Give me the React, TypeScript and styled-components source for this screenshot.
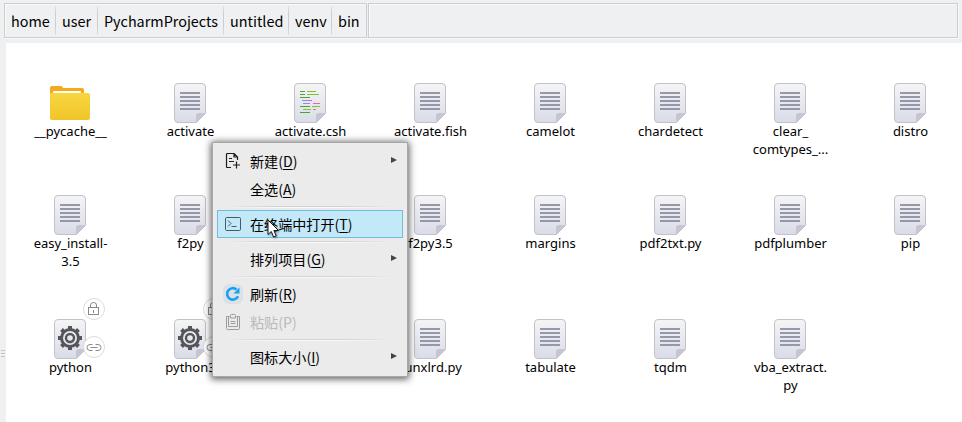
import React from 'react'
import styled, { createGlobalStyle } from 'styled-components'

type Kind = 'folder' | 'text' | 'code' | 'exec'

interface Entry {
    lines: string[]
    kind: Kind
    linked?: boolean
    column?: number
}

const crumbs = [
    { name: "home", width: 51 },
    { name: "user", width: 42 },
    { name: "PycharmProjects", width: 126 },
    { name: "untitled", width: 65 },
    { name: "venv", width: 43 },
    { name: "bin", width: 34 },
]

const entries: Entry[] = [
    { lines: ["__pycache__"], kind: 'folder' },
    { lines: ["activate"], kind: 'text' },
    { lines: ["activate.csh"], kind: 'code' },
    { lines: ["activate.fish"], kind: 'text' },
    { lines: ["camelot"], kind: 'text' },
    { lines: ["chardetect"], kind: 'text' },
    { lines: ["clear_", "comtypes_..."], kind: 'text' },
    { lines: ["distro"], kind: 'text' },
    { lines: ["easy_install-", "3.5"], kind: 'text' },
    { lines: ["f2py"], kind: 'text' },
    { lines: ["f2py3.5"], kind: 'text', column: 4 },
    { lines: ["margins"], kind: 'text' },
    { lines: ["pdf2txt.py"], kind: 'text' },
    { lines: ["pdfplumber"], kind: 'text' },
    { lines: ["pip"], kind: 'text' },
    { lines: ["python"], kind: 'exec', linked: true },
    { lines: ["python3"], kind: 'exec', linked: true },
    { lines: ["runxlrd.py"], kind: 'text', column: 4 },
    { lines: ["tabulate"], kind: 'text' },
    { lines: ["tqdm"], kind: 'text' },
    { lines: ["vba_extract.", "py"], kind: 'text' },
]

const codeLines: [number, number, number, string][] = [
    [6, 8.5, 5, '#4aa52c'], [13, 8.5, 9, '#7dc52e'],
    [6, 11.5, 5, '#4aa52c'], [13, 11.5, 12, '#7dc52e'],
    [6, 14.5, 10, '#4aa52c'],
    [8, 17.5, 10, '#9a83ee'],
    [9, 20.5, 7, '#9a83ee'], [19, 20.5, 7, '#ea6c8c'],
    [6, 23.5, 10, '#4aa52c'], [18, 23.5, 8, '#7dc52e'],
    [9, 26.5, 8, '#7dc52e'], [19, 26.5, 3, '#ea6c8c'],
    [6, 29.5, 10, '#4aa52c'],
]

const FolderIcon = () => (
    <svg width="40" height="40" viewBox="0 0 40 40">
        <path d="M0 5q0-2 2-2h9q1 0 1.500 1l.5 1H32q2 0 2 2v5H0z" fill="#f6a91b" />
        <rect x="3" y="8" width="28" height="4" rx="1" fill="#fff" />
        <path d="M0 10h38q2 0 2 2v23q0 2-2 2H2q-2 0-2-2z" fill="url(#folder)" />
        <defs>
            <linearGradient id="folder" x1="0" y1="0" x2="0" y2="1">
                <stop offset="0" stopColor="#f8d640" />
                <stop offset="1" stopColor="#f0c52a" />
            </linearGradient>
        </defs>
    </svg>
)

const SheetIcon = ({ kind }: { kind: Kind }) => (
    <svg width="32" height="40" viewBox="0 0 32 40">
        <defs>
            <linearGradient id="sheet" x1="0" y1="0" x2="0" y2="1">
                <stop offset="0" stopColor="#f5f5f6" />
                <stop offset="1" stopColor="#d9dbe8" />
            </linearGradient>
        </defs>
        <path d="M4 .5h24q3.500 0 3.500 3.500v26.500l-9 9H4q-3.500 0-3.500-3.500V4Q.5.5 4 .5z" fill="url(#sheet)" stroke="#c2c3ca" />
        <path d="M22 39.500V33q0-3 3-3h6.500z" fill="#c5c6d2" />
        {kind === 'text' && [9, 13, 17, 21, 25].map((y) => (
            <rect key={y} x="6" y={y} width="20" height="2" fill="#9498a9" />
        ))}
        {kind === 'code' && codeLines.map(([x, y, w, color], i) => (
            <rect key={i} x={x} y={y - .5} width={w} height="1" fill={color} />
        ))}
        {kind === 'exec' && (
            <g transform="translate(16 19)" fill="none" stroke="#55565a">
                <circle r="8.500" strokeWidth="3" />
                <circle r="4" strokeWidth="2.400" />
                {[0, 45, 90, 135, 180, 225, 270, 315].map((a) => (
                    <path key={a} d="M0-9v-3" strokeWidth="4" transform={`rotate(${a})`} />
                ))}
            </g>
        )}
    </svg>
)

const LockIcon = () => (
    <svg width="20" height="20" viewBox="0 0 20 20" fill="none" stroke="#8b8b8b">
        <rect x="4.500" y="8.500" width="10" height="7" />
        <path d="M6.500 8.500V6q0-2.500 3-2.500t3 2.500v2.500M9.500 11v3" />
    </svg>
)

const LinkIcon = () => (
    <svg width="20" height="20" viewBox="0 0 20 20" fill="none" stroke="#8b8b8b">
        <path d="M8.500 13.500H6a3 3 0 0 1 0-6h2.500M11.500 7.500H14a3 3 0 0 1 0 6h-2.500M6.500 10.500h7" />
    </svg>
)

const NewIcon = () => (
    <svg width="16" height="16" viewBox="0 0 16 16" fill="none" stroke="#1d1d1d" strokeWidth="1.200">
        <path d="M6 14.500H2.500q-1 0-1-1V1.500q0-1 1-1h6.500l3.500 3.500V7M9 .5V4h3.500M4 5.500h3M4 8.500h5M11.500 8.500v7M8 12h7" />
    </svg>
)

const TerminalIcon = () => (
    <svg width="16" height="16" viewBox="0 0 16 16" fill="none" stroke="#4a5a62">
        <rect x=".5" y="1.500" width="15" height="13" rx="1.200" />
        <path d="M3 4.500l3 3-3 3M6.500 10.500h5" />
    </svg>
)

const RefreshIcon = () => (
    <svg width="20" height="20" viewBox="0 0 20 20">
        <rect width="20" height="20" rx="6" fill="#dce1e6" />
        <path d="M15 12.200A5.700 5.700 0 1 1 13.600 5.600" fill="none" stroke="#16a2f2" strokeWidth="2.600" />
        <path d="M16.500 3.500v6h-6z" fill="#16a2f2" />
    </svg>
)

const PasteIcon = () => (
    <svg width="16" height="16" viewBox="0 0 16 16" fill="none" stroke="#9c9c9c">
        <path d="M4.500 2.500h-3v12q0 1 1 1h11q1 0 1-1v-12h-3M3.500 2.500v10h9v-10" />
        <path d="M5.500 4V1.500q0-1 1-1h3q1 0 1 1V4zM5.500 7.500h5M5.500 9.500h5" />
    </svg>
)

interface ItemProps {
    label: string
    hotkey: string
    icon?: React.ReactNode
    more?: boolean
    active?: boolean
    disabled?: boolean
}

const Item = ({ label, hotkey, icon, more, active, disabled }: ItemProps) => (
    <MenuItem $active={active} $disabled={disabled}>
        <IconSlot>{icon}</IconSlot>
        <ItemText>{label}({disabled ? hotkey : <u>{hotkey}</u>})</ItemText>
        {more && <Arrow />}
    </MenuItem>
)

const App = () => {
  return (
    <Window>
        <GlobalStyle />
        <Toolbar>
            <Path>
                {crumbs.map((el) => (
                    <Crumb key={el.name} $width={el.width}>{el.name}</Crumb>
                ))}
            </Path>
            <PathRest />
        </Toolbar>
        <Body>
            <Splitter><Grip /><Grip /><Grip /></Splitter>
            <Files>
                {entries.map((el, i) => (
                    <File key={i} $column={el.column}>
                        <Thumb>
                            {el.kind === 'folder' ? <FolderIcon /> : <SheetIcon kind={el.kind} />}
                            {el.linked && <Badge $top={-21}><LockIcon /></Badge>}
                            {el.linked && <Badge $top={17}><LinkIcon /></Badge>}
                        </Thumb>
                        <Label>
                            {el.lines.map((line) => <Name key={line}>{line}</Name>)}
                        </Label>
                    </File>
                ))}
            </Files>
        </Body>
        <Menu>
            <Item label="新建" hotkey="D" icon={<NewIcon />} more />
            <Item label="全选" hotkey="A" />
            <Divider />
            <Item label="在终端中打开" hotkey="T" icon={<TerminalIcon />} active />
            <Divider />
            <Item label="排列项目" hotkey="G" more />
            <Divider />
            <Item label="刷新" hotkey="R" icon={<RefreshIcon />} />
            <Item label="粘贴" hotkey="P" icon={<PasteIcon />} disabled />
            <Divider />
            <Item label="图标大小" hotkey="I" more />
        </Menu>
        <Cursor width="13" height="20" viewBox="0 0 13 20">
            <path d="M1 1v14.500l3.300-3 2.300 5.500 2.600-1.100-2.300-5.400h4.600z" fill="#fff" stroke="#111" />
        </Cursor>
    </Window>
  )
}

export default App;

const GlobalStyle = createGlobalStyle`
* {
box-sizing: border-box;
}
body {
margin: 0;
overflow: hidden;
}
svg {
display: block;
flex: none;
}
`
const Window = styled.div`
position: relative;
width: 962px;
height: 422px;
display: flex;
flex-direction: column;
background-color: #eff0f2;
color: #000;
font-family: "Noto Sans", "Noto Sans CJK SC", sans-serif;
overflow: hidden;
`
const Toolbar = styled.header`
height: 43px;
padding: 3px 3px 5px 4px;
display: flex;
gap: 1px;
`
const Path = styled.nav`
display: flex;
border: 1px solid #cccdd0;
box-shadow: inset 1px 1px 0 #fafafb, 0 1px 0 #fafafb;
`
const Crumb = styled.span<{ $width: number }>`
width: ${(p) => p.$width}px;
height: 29px;
margin-top: 2px;
padding-left: 6px;
font-family: "Noto Sans CJK SC", sans-serif;
font-size: 14.4px;
line-height: 29px;
white-space: nowrap;
border-right: 1px solid;
border-image: linear-gradient(#e2e3e6, #cccdd0 30%, #cccdd0 70%, #e2e3e6) 1;
&:last-child {
border-right: none;
border-image: none;
}
`
const PathRest = styled.div`
flex: 1;
margin-right: 1px;
border: 1px solid #cccdd0;
box-shadow: inset 1px 1px 0 #fafafb, 1px 1px 0 #fafafb;
`
const Body = styled.div`
flex: 1;
display: flex;
`
const Splitter = styled.div`
width: 6px;
padding: 307px 0 0 1px;
display: flex;
flex-direction: column;
gap: 2px;
`
const Grip = styled.i`
width: 4px;
height: 1px;
background-color: #c3c4c6;
`
const Files = styled.main`
flex: 1;
padding: 40px 0 0 4px;
display: grid;
grid-template-columns: repeat(8, 120px);
grid-template-rows: 112px 124px 100px;
background-color: #fff;
overflow: hidden;
`
const File = styled.div<{ $column?: number }>`
grid-column: ${(p) => p.$column || 'auto'};
display: flex;
align-items: center;
flex-direction: column;
`
const Thumb = styled.div`
position: relative;
height: 40px;
`
const Label = styled.div`
margin-top: -1px;
padding-left: 1px;
display: flex;
align-items: center;
flex-direction: column;
`
const Name = styled.span`
font-size: 13px;
line-height: 18px;
white-space: nowrap;
`
const Badge = styled.div<{ $top: number }>`
position: absolute;
left: 29px;
top: ${(p) => p.$top}px;
width: 22px;
height: 22px;
display: flex;
border: 1px solid #dcdcdc;
border-radius: 50%;
background-color: #fff;
`
const Menu = styled.div`
position: absolute;
left: 212px;
top: 142px;
width: 196px;
height: 235px;
padding: 4px;
display: flex;
flex-direction: column;
background-color: #ebebeb;
border: 1px solid #a8a8a8;
box-shadow: 0 1px 7px 1px rgba(0, 0, 0, 0.65);
`
const MenuItem = styled.div<{ $active?: boolean, $disabled?: boolean }>`
height: 28px;
padding-left: 5px;
display: flex;
align-items: center;
border: 1px solid ${(p) => p.$active ? '#6dbfdf' : 'transparent'};
background-color: ${(p) => p.$active ? '#c3e9f8' : 'transparent'};
color: ${(p) => p.$disabled ? '#bababa' : '#000'};
`
const IconSlot = styled.span`
width: 20px;
height: 20px;
margin-right: 7px;
display: flex;
align-items: center;
justify-content: center;
`
const ItemText = styled.span`
flex: 1;
font-family: "Noto Sans CJK SC", sans-serif;
font-size: 14.1px;
line-height: 20px;
white-space: nowrap;
u {
text-underline-offset: 2px;
}
`
const Arrow = styled.i`
margin: 0 5px 2px 0;
border-left: 6px solid #444;
border-top: 3.5px solid transparent;
border-bottom: 3.5px solid transparent;
`
const Divider = styled.hr`
width: 170px;
height: 2px;
margin: 3px 0 2px 7px;
border: none;
background: linear-gradient(90deg, #ebebeb, #d2d2d2 30%, #d2d2d2 70%, #ebebeb) top / 100% 1px no-repeat, linear-gradient(90deg, #ebebeb, #f8f8f8 30%, #f8f8f8 70%, #ebebeb);
`
const Cursor = styled.svg`
position: absolute;
left: 267px;
top: 219px;
filter: drop-shadow(1px 1px 1px rgba(0, 0, 0, 0.4));
`
